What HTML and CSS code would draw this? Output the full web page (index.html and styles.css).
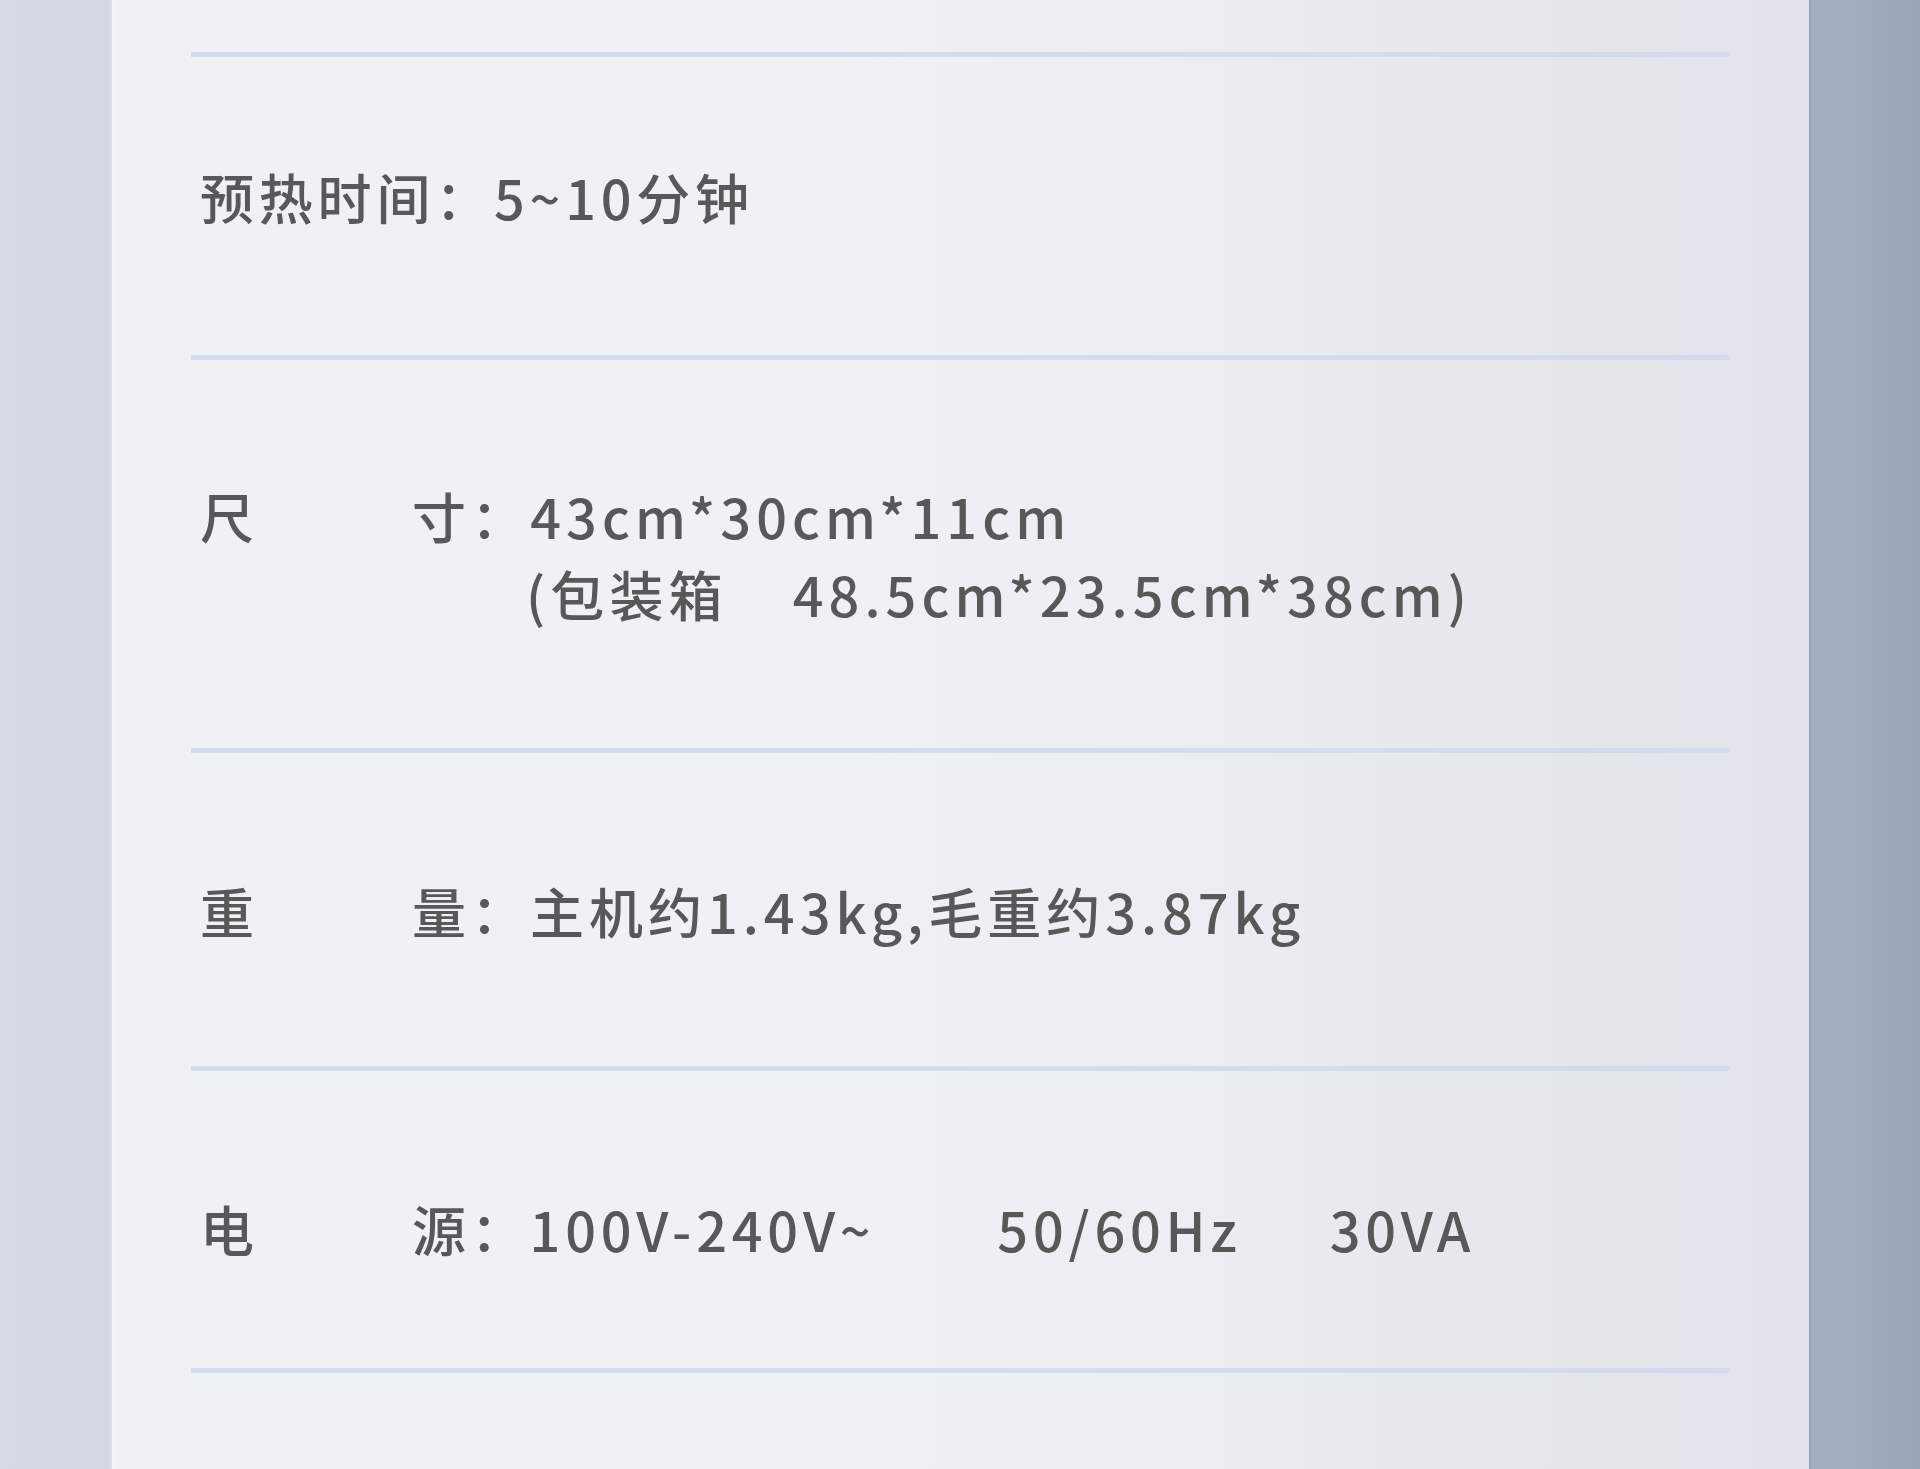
FILE: index.html
```html
<!DOCTYPE html>
<html lang="zh-CN">
<head>
<meta charset="utf-8">
<title>产品参数</title>
<link rel="stylesheet" href="styles.css">
</head>
<body>
<div class="page">
  <aside class="side side-left"></aside>
  <main class="panel">
    <section class="specs">
      <div class="rule"></div>
      <div class="row row-heat">
        <p class="line">预热时间：5~10分钟</p>
      </div>
      <div class="rule"></div>
      <div class="row row-size">
        <p class="line"><span class="key">尺</span>寸：43cm*30cm*11cm</p>
        <p class="line indent">(包装箱<span class="wide">　</span>48.5cm*23.5cm*38cm)</p>
      </div>
      <div class="rule"></div>
      <div class="row row-weight">
        <p class="line"><span class="key">重</span>量：主机约1.43kg,毛重约3.87kg</p>
      </div>
      <div class="rule"></div>
      <div class="row row-power">
        <p class="line"><span class="key">电</span>源：100V-240V~<span class="gap-a">50/60Hz</span><span class="gap-b">30VA</span></p>
      </div>
      <div class="rule"></div>
    </section>
  </main>
  <aside class="side side-right"></aside>
</div>
</body>
</html>
```
FILE: styles.css
```css
* {
  box-sizing: border-box;
}

html, body {
  margin: 0;
  padding: 0;
}

body {
  width: 1920px;
  height: 1469px;
  overflow: hidden;
  font-family: "Noto Sans CJK SC", "Noto Sans", sans-serif;
  color: #585858;
}

.page {
  display: grid;
  grid-template-columns: 112px 1697px 111px;
  height: 1469px;
}

.side-left {
  background: linear-gradient(to right, #d6dbe6 0%, #d5dae5 90%, #d0d5e1 97%, #dde0e9 100%);
}

.side-right {
  background: linear-gradient(to right, #98a0b6 0%, #a6aec3 3%, #a4acc1 30%, #a0a8bd 70%, #9ba4ba 100%);
}

.panel {
  background:
    linear-gradient(to right, rgba(255,255,255,0.35) 0px, rgba(255,255,255,0) 8px),
    linear-gradient(to right, #eff1f5 0%, #eff1f5 40%, #eceef3 62%, #e6e8ee 80%, #e1e3ea 100%);
  padding-top: 52px;
}

.specs {
  margin-left: 79px;
  width: 1539px;
  display: flex;
  flex-direction: column;
}

.rule {
  height: 5px;
  background: #d4dbeb;
}

.row {
  padding-left: 9px;
}

.row-heat {
  height: 298px;
  padding-top: 101px;
}

.row-heat .line {
  letter-spacing: 4.8px;
}

.row-size {
  height: 388px;
  padding-top: 117px;
}

.row-size .line {
  letter-spacing: 5.1px;
}

.row-size .wide {
  letter-spacing: 11px;
}

.row-weight {
  height: 313px;
  padding-top: 119px;
}

.row-weight .line {
  letter-spacing: 5px;
}

.row-power {
  height: 297px;
  padding-top: 119px;
}

.row-power .line {
  letter-spacing: 4.8px;
}

.line {
  margin: 0;
  font-size: 54px;
  font-weight: 500;
  line-height: 78px;
  letter-spacing: 5px;
  white-space: nowrap;
}

.key {
  display: inline-block;
  width: 212px;
}

.indent {
  padding-left: 326px;
}

.gap-a {
  margin-left: 122px;
}

.gap-b {
  margin-left: 88px;
}
```
